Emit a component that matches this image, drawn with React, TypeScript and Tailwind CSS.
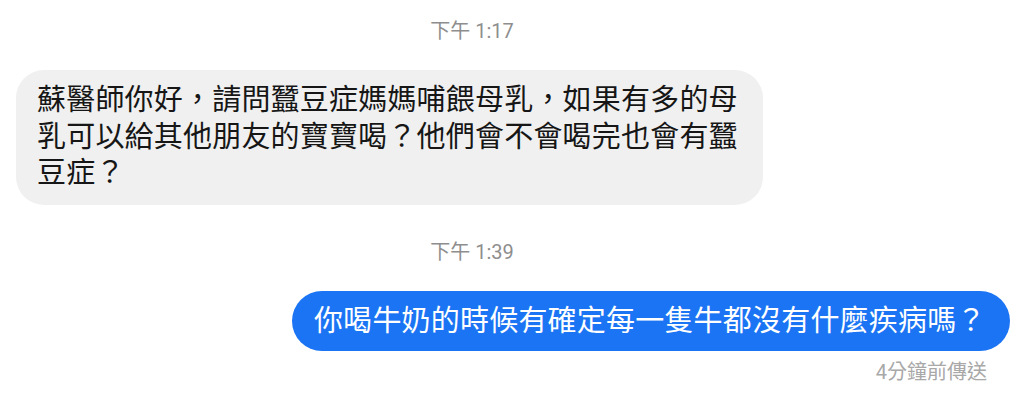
export default function App() {
  return (
    <div
      className="flex h-[420px] w-[1024px] flex-col overflow-hidden bg-white"
      style={{ fontFamily: 'Roboto, "Noto Sans CJK TC", sans-serif' }}
    >
      <div className="pr-[80px] pt-[19px] text-center text-[20px] leading-[24px] text-[#8e8e8e]">下午 1:17</div>

      <div className="ml-[16px] mt-[27px] w-[747px] rounded-[28px] bg-[#f0f0f0] pb-[13px] pl-[21px] pr-[20px] pt-[12px] text-[29px] leading-[36.5px] tracking-[0.2px] text-[#161616]">
        蘇醫師你好，請問蠶豆症媽媽哺餵母乳，如果有多的母乳可以給其他朋友的寶寶喝？他們會不會喝完也會有蠶豆症？
      </div>

      <div className="mt-[35px] pr-[80px] text-center text-[20px] leading-[24px] text-[#8e8e8e]">下午 1:39</div>

      <div className="mr-[14px] mt-[27px] self-end">
        <div className="w-[718px] rounded-full bg-[#1b74f4] py-[12px] pl-[22px] text-[29px] leading-[36px] tracking-[0.2px] text-white">
          你喝牛奶的時候有確定每一隻牛都沒有什麼疾病嗎？
        </div>
      </div>

      <div className="mt-[9px] pr-[37px] text-right text-[20px] leading-[24px] text-[#a8a8a8]">4分鐘前傳送</div>
    </div>
  );
}
